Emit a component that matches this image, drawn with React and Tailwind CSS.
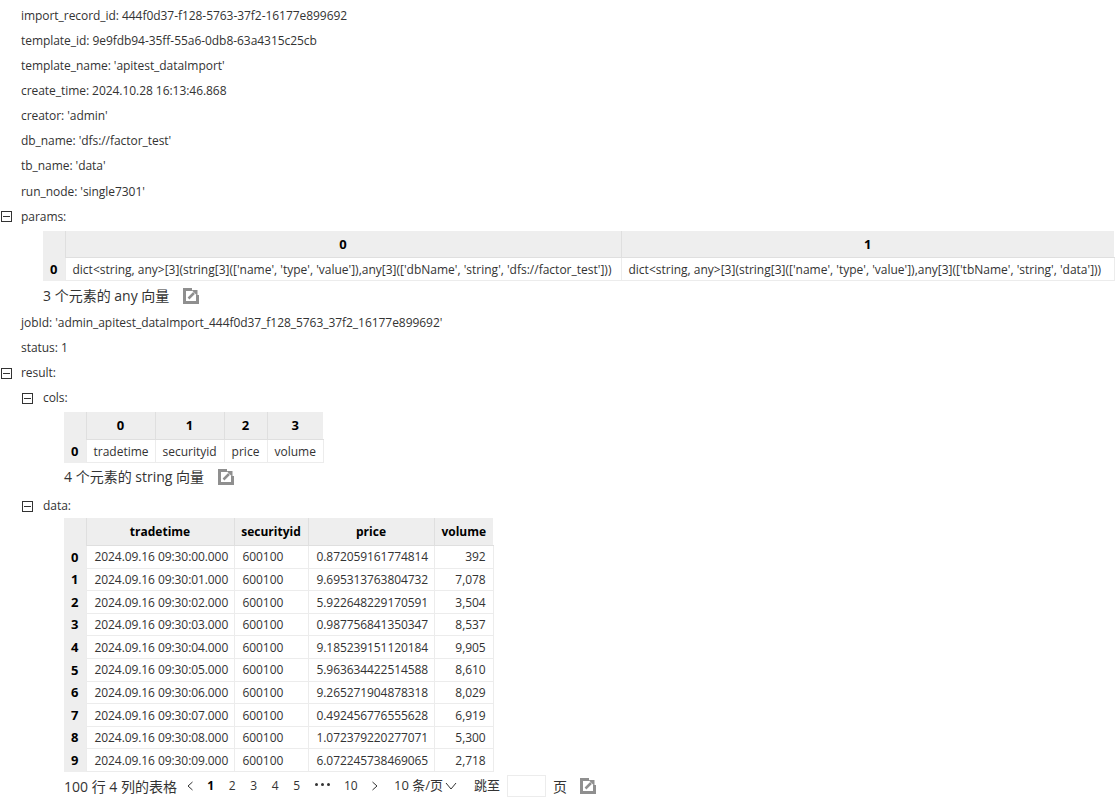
import React from 'react';

const font = "font-['Open_Sans','Noto_Sans_CJK_SC',sans-serif]";

const topFields = [
  "import_record_id: 444f0d37-f128-5763-37f2-16177e899692",
  "template_id: 9e9fdb94-35ff-55a6-0db8-63a4315c25cb",
  "template_name: 'apitest_dataImport'",
  "create_time: 2024.10.28 16:13:46.868",
  "creator: 'admin'",
  "db_name: 'dfs://factor_test'",
  "tb_name: 'data'",
  "run_node: 'single7301'",
];

const dataRows = [
  ['2024.09.16 09:30:00.000', '600100', '0.872059161774814', '392'],
  ['2024.09.16 09:30:01.000', '600100', '9.695313763804732', '7,078'],
  ['2024.09.16 09:30:02.000', '600100', '5.922648229170591', '3,504'],
  ['2024.09.16 09:30:03.000', '600100', '0.987756841350347', '8,537'],
  ['2024.09.16 09:30:04.000', '600100', '9.185239151120184', '9,905'],
  ['2024.09.16 09:30:05.000', '600100', '5.963634422514588', '8,610'],
  ['2024.09.16 09:30:06.000', '600100', '9.265271904878318', '8,029'],
  ['2024.09.16 09:30:07.000', '600100', '0.492456776555628', '6,919'],
  ['2024.09.16 09:30:08.000', '600100', '1.072379220277071', '5,300'],
  ['2024.09.16 09:30:09.000', '600100', '6.072245738469065', '2,718'],
];

const Toggle = () => (
  <span className="w-[11px] h-[11px] border border-[#333] flex items-center justify-center shrink-0 bg-white">
    <span className="w-[7px] h-px bg-[#333]"></span>
  </span>
);

const ExportIcon = () => (
  <svg width="16" height="16" viewBox="0 0 16 16" className="shrink-0">
    <path d="M0 0h16v16H0z" fill="#8f8f8f" />
    <path d="M3 3h10v10H3z" fill="#fff" />
    <path d="M9 0h7v7H9z" fill="#fff" />
    <path d="M5.500 10.500L11 5" stroke="#8f8f8f" strokeWidth="2.500" fill="none" />
    <path d="M8.500 2h6v6z" fill="#8f8f8f" />
  </svg>
);

const Field = ({ children }) => (
  <div className="h-[25.15px] pl-[21px] flex items-center whitespace-nowrap tracking-[-0.05px]">{children}</div>
);

const Expander = ({ label, nested, className = '' }) => (
  <div className={`h-[25px] flex items-center whitespace-nowrap tracking-[-0.05px] ${nested ? 'pl-[22px] gap-[10px]' : 'pl-px gap-[9px]'} ${className}`}>
    <Toggle />
    <span>{label}</span>
  </div>
);

const Caption = ({ text, className }) => (
  <div className={`flex items-center gap-[14px] text-[14px] whitespace-nowrap ${className}`}>
    <span>{text}</span>
    <ExportIcon />
  </div>
);

const DataTable = ({ columns, widths, rows, headHeight, rowHeight = 23, align, headClass = '', cellClass = 'px-[7px]' }) => (
  <table className="border-collapse table-fixed" style={{ width: 22 + widths.reduce((a, b) => a + b + 1, 0) }}>
    <colgroup>
      <col className="w-[22px]" />
      {widths.map((w, i) => (
        <col key={i} style={{ width: w + 1 }} />
      ))}
    </colgroup>
    <thead>
      <tr style={{ height: headHeight }}>
        <th className="bg-[#eeeeee] p-0"></th>
        {columns.map((c) => (
          <th key={c} className={`bg-[#eeeeee] border-l border-b border-[#dfdfdf] p-0 pt-px font-bold text-center text-black ${headClass}`}>{c}</th>
        ))}
      </tr>
    </thead>
    <tbody>
      {rows.map((row, i) => (
        <tr key={i} style={{ height: rowHeight }}>
          <td className="bg-[#eeeeee] p-0 pt-px font-bold text-center text-black text-[13px]">{i}</td>
          {row.map((cell, j) => (
            <td
              key={j}
              className={`border border-[#ececec] pt-px pb-0 whitespace-nowrap overflow-hidden ${cellClass} ${align?.[j] || 'text-left'}`}
            >
              {cell}
            </td>
          ))}
        </tr>
      ))}
    </tbody>
  </table>
);

const Pagination = () => (
  <div className="flex items-center h-[26px] ml-[64px] mt-px whitespace-nowrap">
    <span className="w-[122px] text-[14px]">100 行 4 列的表格</span>
    <svg width="8" height="10" viewBox="0 0 8 10" className="mr-[6px]"><path d="M6.500 1L2 5l4.500 4" fill="none" stroke="#333" /></svg>
    {[1, 2, 3, 4, 5].map((n) => (
      <span key={n} className={`w-[21.5px] text-center ${n === 1 ? 'font-bold text-black' : ''}`}>{n}</span>
    ))}
    <span className="flex gap-[3px] ml-[7.5px] mb-[3px]">
      <span className="w-[3px] h-[3px] rounded-full bg-[#333]"></span>
      <span className="w-[3px] h-[3px] rounded-full bg-[#333]"></span>
      <span className="w-[3px] h-[3px] rounded-full bg-[#333]"></span>
    </span>
    <span className="w-[14px] ml-[14px]">10</span>
    <svg width="8" height="10" viewBox="0 0 8 10" className="ml-[13px]"><path d="M1.500 1L6 5 1.500 9" fill="none" stroke="#333" /></svg>
    <span className="w-[50px] ml-[15px] text-[13px]">10 条/页</span>
    <svg width="12" height="8" viewBox="0 0 12 8" className="ml-px"><path d="M1 1l5 6 5-6" fill="none" stroke="#333" /></svg>
    <span className="w-[33px] ml-[17px] text-[13px]">跳至</span>
    <span className="w-[39px] h-[22px] border border-[#ececec]"></span>
    <span className="w-[14px] ml-[7px] text-[14px]">页</span>
    <span className="ml-[13px]"><ExportIcon /></span>
  </div>
);

export default function App() {
  return (
    <div className={`${font} w-[1115px] h-[806px] overflow-hidden bg-white text-[12px] text-[#333] pt-[3px]`}>
      {topFields.map((f) => (
        <Field key={f}>{f}</Field>
      ))}
      <Expander label="params:" className="mt-[0.2px]" />
      <div className="ml-[43px] mt-[1.5px]">
        <DataTable
          columns={['0', '1']}
          widths={[555, 492]}
          headHeight={27}
          headClass="text-[13px]"
          rows={[[
            "dict<string, any>[3](string[3](['name', 'type', 'value']),any[3](['dbName', 'string', 'dfs://factor_test']))",
            "dict<string, any>[3](string[3](['name', 'type', 'value']),any[3](['tbName', 'string', 'data']))",
          ]]}
        />
      </div>
      <Caption text="3 个元素的 any 向量" className="ml-[43px] h-[29px]" />
      <Field>jobId: 'admin_apitest_dataImport_444f0d37_f128_5763_37f2_16177e899692'</Field>
      <Field>status: 1</Field>
      <Expander label="result:" />
      <Expander label="cols:" nested />
      <div className="ml-[64px] mt-px">
        <DataTable
          columns={['0', '1', '2', '3']}
          widths={[68, 68, 42, 55]}
          headHeight={28}
          headClass="text-[13px]"
          align={['text-center', 'text-center', 'text-center', 'text-center']}
          rows={[['tradetime', 'securityid', 'price', 'volume']]}
        />
      </div>
      <Caption text="4 个元素的 string 向量" className="ml-[64px] h-[27px]" />
      <Expander label="data:" nested className="mt-[3.5px] -mb-px" />
      <div className="ml-[64px]">
        <DataTable
          columns={['tradetime', 'securityid', 'price', 'volume']}
          widths={[147, 73, 125, 58]}
          headHeight={28}
          rowHeight={22.6}
          cellClass="pl-[8px] pr-[7px] tracking-[-0.08px]"
          align={['text-left', 'text-left', 'text-right', 'text-right']}
          rows={dataRows}
        />
      </div>
      <Pagination />
    </div>
  );
}
